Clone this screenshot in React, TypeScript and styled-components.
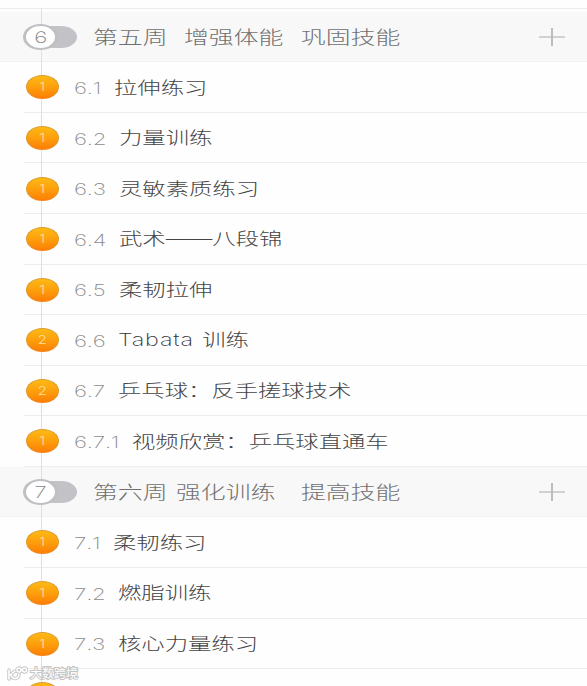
import React from "react";
import styled, { createGlobalStyle } from "styled-components";

const Global = createGlobalStyle`
  * { box-sizing: border-box; }
  html, body { margin: 0; background: #fefefe; overflow: hidden; }
  body { font-family: Inter, "Noto Sans CJK SC", sans-serif; font-weight: 300; }
`;

const ROW = 50.57;

const Page = styled.main`
  position: relative;
  width: 587px;
  height: 686px;
  padding-top: 8px;
  overflow: hidden;
  background: #fefefe;
`;

const TopRule = styled.div`
  height: 3.8px;
  border-top: 1px solid #ececec;
`;

const Timeline = styled.div`
  position: absolute;
  left: 41px;
  top: 8px;
  bottom: 0;
  width: 1px;
  background: #e0e0e2;
`;

const HeaderRow = styled.header`
  display: flex;
  align-items: center;
  height: ${ROW}px;
  padding-left: 23px;
  background: #f8f8f8;
  border-bottom: 1px solid #f1f1f1;
`;

const Toggle = styled.div`
  position: relative;
  z-index: 1;
  flex: none;
  display: flex;
  align-items: center;
  width: 54px;
  height: 22px;
  margin: 1px 16px 0 0;
  &::before {
    content: "";
    position: absolute;
    left: 15px;
    top: 0;
    width: 39px;
    height: 22px;
    border-radius: 0 16px 16px 0 / 0 11px 11px 0;
    background: #c3c3c7;
  }
`;

const Knob = styled.div`
  position: relative;
  flex: none;
  display: grid;
  place-items: center;
  width: 35px;
  height: 26px;
  border: 2px solid #c0c0c4;
  border-width: 2px 3px;
  border-radius: 50%;
  background: #fff;
  color: #858585;
  font-size: 16px;
  font-weight: 200;
  line-height: 1;
`;

const Wide = styled.span<{ $scale?: number }>`
  display: inline-block;
  white-space: pre;
  transform: scaleX(${(p) => p.$scale ?? 1.37});
  transform-origin: ${(p) => (p.$scale ? "center" : "left")};
`;

const Segment = styled.h2<{ $width: number }>`
  flex: none;
  width: ${(p) => p.$width}px;
  margin: 1px 0 0;
  color: #707070;
  font-size: 18.15px;
  font-weight: 300;
  line-height: 26px;
  white-space: nowrap;
`;

const Plus = styled.svg`
  flex: none;
  width: 26px;
  height: 20px;
  margin: 1px 0 0 46px;
`;

const ItemRow = styled.div`
  display: flex;
  align-items: center;
  height: ${ROW}px;
  margin-left: 24px;
  padding-left: 2px;
  border-bottom: 1px solid #ededed;
`;

const Badge = styled.div`
  position: relative;
  z-index: 1;
  flex: none;
  display: grid;
  place-items: center;
  width: 33px;
  height: 24px;
  margin-top: 0.5px;
  margin-right: 15px;
  padding-top: 1px;
  border-radius: 50%;
  border: 1px solid #dc9a2c;
  border-bottom-color: #f5851b;
  background: linear-gradient(#fdbd16, #fd9f0c 50%, #fc7c04);
  background-origin: border-box;
  color: #ffe1a0;
  font-size: 11px;
  line-height: 1;
`;

const Index = styled.div<{ $width: number }>`
  flex: none;
  width: ${(p) => p.$width}px;
  color: #8c8c8c;
  font-size: 16.3px;
  font-weight: 200;
  font-kerning: none;
  letter-spacing: -0.15px;
  line-height: 24px;
  margin-top: 1.6px;
`;

const Title = styled.div`
  color: #444;
  font-size: 17.05px;
  line-height: 24px;
  margin-top: 1px;
  word-spacing: 1.2px;
  white-space: nowrap;
`;

const Latin = styled.span`
  letter-spacing: 0.6px;
  font-weight: 200;
  color: #333;
`;

const Watermark = styled.div`
  position: absolute;
  z-index: 2;
  left: 6px;
  top: 665px;
  display: flex;
  align-items: center;
  gap: 2px;
  height: 18px;
  color: #fff;
  font-size: 12px;
  font-weight: 400;
  line-height: 18px;
  -webkit-text-stroke: 2px #c4c4c4;
  paint-order: stroke fill;
`;

type Item = { badge: string; index: string; title: React.ReactNode; width: number };

const week5: Item[] = [
  { badge: "1", index: "6.1", title: "拉伸练习", width: 40 },
  { badge: "1", index: "6.2", title: "力量训练", width: 45 },
  { badge: "1", index: "6.3", title: "灵敏素质练习", width: 45 },
  { badge: "1", index: "6.4", title: "武术——八段锦", width: 45 },
  { badge: "1", index: "6.5", title: "柔韧拉伸", width: 45 },
  { badge: "2", index: "6.6", title: <><Latin>Tabata</Latin> 训练</>, width: 44 },
  { badge: "2", index: "6.7", title: "乒乓球：反手搓球技术", width: 44 },
  { badge: "1", index: "6.7.1", title: "视频欣赏：乒乓球直通车", width: 58 },
];

const week6: Item[] = [
  { badge: "1", index: "7.1", title: "柔韧练习", width: 39 },
  { badge: "1", index: "7.2", title: "燃脂训练", width: 44 },
  { badge: "1", index: "7.3", title: "核心力量练习", width: 44 },
  { badge: "", index: "", title: "", width: 44 },
];

function Header({ no, parts }: { no: string; parts: [string, number][] }) {
  return (
    <HeaderRow>
      <Toggle>
        <Knob><Wide $scale={1.4}>{no}</Wide></Knob>
      </Toggle>
      {parts.map(([text, width]) => (
        <Segment key={text} $width={width}><Wide>{text}</Wide></Segment>
      ))}
      <Plus viewBox="0 0 26 20">
        <path d="M0 10H26" stroke="#c4c4c4" strokeWidth="1.5" />
        <path d="M13 1V19" stroke="#bdbdbd" strokeWidth="2" />
      </Plus>
    </HeaderRow>
  );
}

function Items({ list }: { list: Item[] }) {
  return list.map((it, i) => (
    <ItemRow key={i}>
      <Badge>{it.badge && <Wide $scale={1.35}>{it.badge}</Wide>}</Badge>
      <Index $width={it.width}><Wide>{it.index}</Wide></Index>
      <Title><Wide>{it.title}</Wide></Title>
    </ItemRow>
  ));
}

export default function App() {
  return (
    <Page>
      <Global />
      <Timeline />
      <TopRule />
      <Header no="6" parts={[["第五周", 91], ["增强体能", 117], ["巩固技能", 192]]} />
      <Items list={week5} />
      <Header no="7" parts={[["第六周", 83], ["强化训练", 125], ["提高技能", 192]]} />
      <Items list={week6} />
      <Watermark>
        <svg width="22" height="16" viewBox="0 0 22 16" fill="none">
          <g stroke="#c4c4c4" strokeWidth="3.4" strokeLinecap="round">
            <path d="M3 4V13M9 5L4.5 9Q7 14 11 12Q13 11 13 8" />
            <circle cx="13" cy="4" r="2" /><circle cx="18.5" cy="4" r="2" />
          </g>
          <g stroke="#fff" strokeWidth="1.6" strokeLinecap="round">
            <path d="M3 4V13M9 5L4.5 9Q7 14 11 12Q13 11 13 8" />
            <circle cx="13" cy="4" r="2" /><circle cx="18.5" cy="4" r="2" />
          </g>
        </svg>
        <span>大数跨境</span>
      </Watermark>
    </Page>
  );
}
